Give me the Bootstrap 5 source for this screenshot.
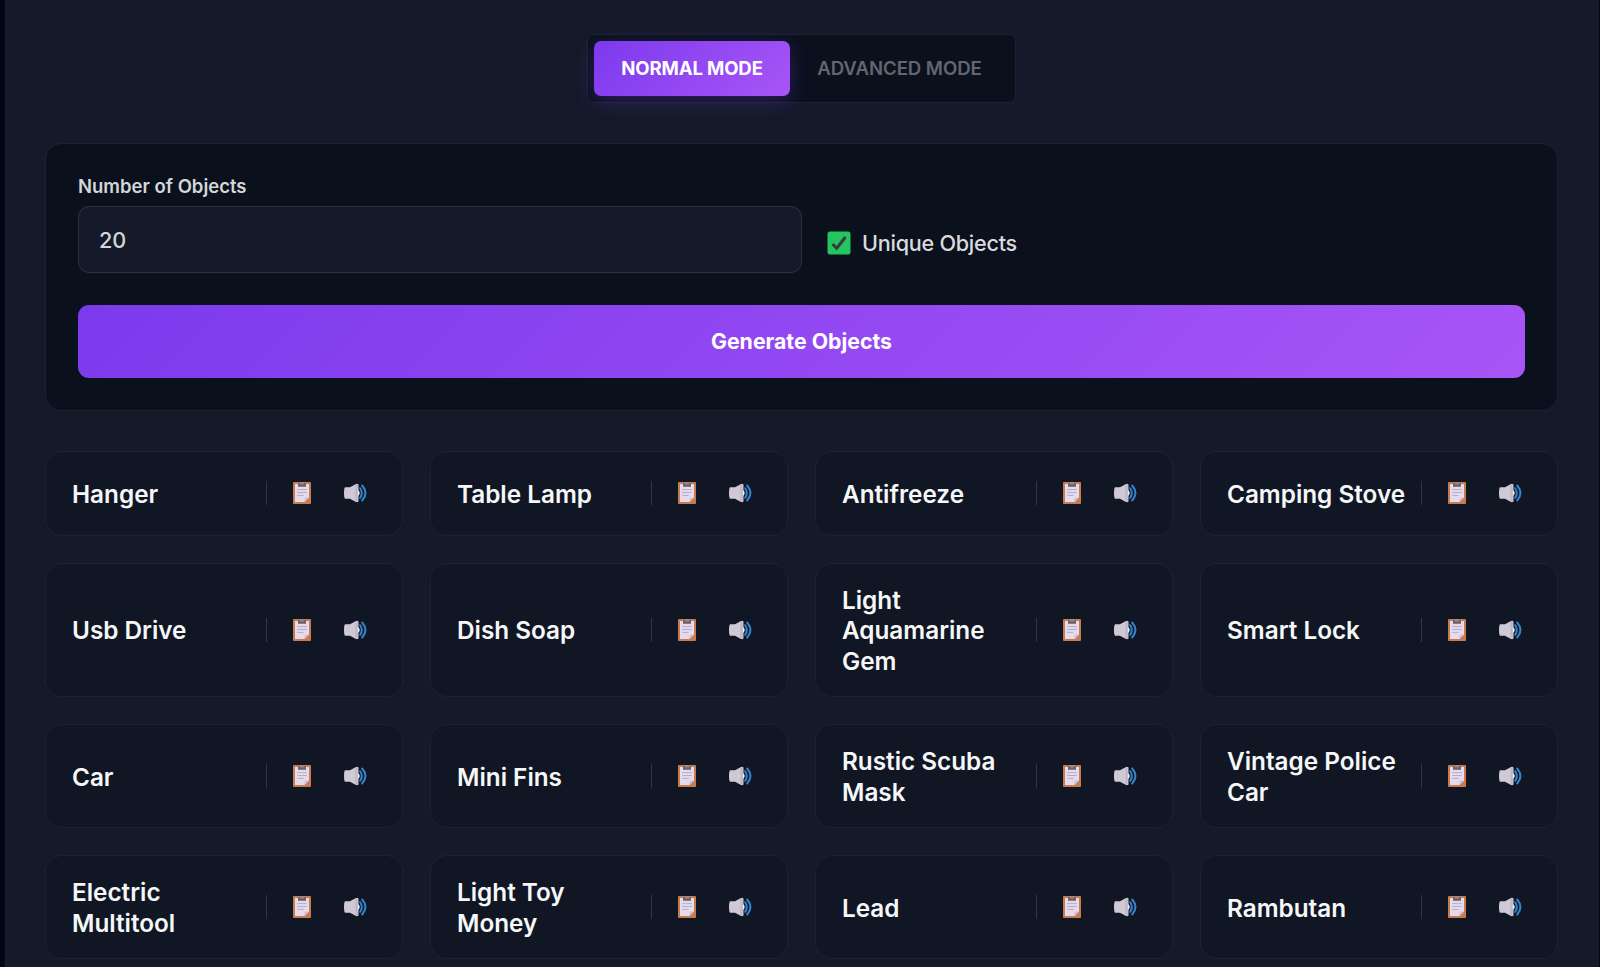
<!DOCTYPE html>
<html lang="en">
<head>
<meta charset="utf-8">
<meta name="viewport" content="width=device-width, initial-scale=1">
<title>Random Object Generator</title>
<link href="https://cdn.jsdelivr.net/npm/bootstrap@5.3.0/dist/css/bootstrap.min.css" rel="stylesheet">
<style>
  html { overflow: hidden; }
  body { background: #030614; color: #f3f4f6; font-family: Inter, "Liberation Sans", sans-serif; height: 967px; overflow: hidden; }
  .generator { margin-left: 5px; margin-right: 1px; height: 967px; overflow: hidden; padding: 34px 41px 0 39px; background: #141a29; border-left: 1px solid #1a2130; }
  .mode-switch { width: 429px; height: 69px; padding: 6px; background: #0a101c; border: 1px solid #1c2232; border-radius: 7px; }
  .mode-switch .btn { font-size: 18.6px; font-weight: 600; padding: 0; border: 0; border-radius: 7px; color: #626672; height: 55px; }
  .mode-switch .btn.active { width: 196px; font-weight: 700; letter-spacing: -.15px; color: #fff; background: linear-gradient(135deg, #7c3aed, #a855f7); box-shadow: 0 5px 20px rgba(124, 58, 237, .3); }
  .mode-switch .other { width: 219px; letter-spacing: -.05px; }
  .settings { margin-top: 40px; height: 268px; padding: 31px 32px; background: #0a101c; border: 1px solid #1c2232; border-radius: 16px; }
  .settings .form-label { font-size: 18.5px; line-height: 23px; font-weight: 600; color: #d4d6da; margin-bottom: 8px; }
  .settings .form-control { width: 724px; height: 67px; padding: 0 20px; font-size: 21.6px; font-weight: 500; color: #d4d6da; background: #141a29; border: 1px solid #2c323f; border-radius: 11px; }
  .unique { margin-left: 25px; padding-top: 38px; gap: 11px; font-size: 21.6px; font-weight: 450; letter-spacing: -.25px; color: #d9dbdf; }
  .generate { margin-top: 32px; height: 73px; border: 0; border-radius: 11px; font-size: 21.3px; font-weight: 700; color: #fff; background: linear-gradient(135deg, #7c3aed, #a855f7); }
  .results { display: grid; grid-template-columns: repeat(4, 1fr); gap: 27px; margin-top: 40px; }
  .result { min-height: 84.500px; padding: 20.2px 26px; background: #101624; border: 1px solid #1c2230; border-radius: 17px; }
  .result-name { flex: 1 1 0; padding-top: 1px; margin-bottom: -1px; font-size: 24.3px; line-height: 30.75px; font-weight: 600; color: #f6f7f8; }
  .tools { width: 110px; height: 24px; margin-left: 8px; padding-left: 26px; border-left: 1px solid #303643; }
  .tools svg { display: block; flex: none; }
  .tools .speaker { margin-left: 33px; }
</style>
</head>
<body>
<svg class="d-none" aria-hidden="true">
  <symbol id="clipboard" viewBox="0 0 18 22">
    <rect width="18" height="22" rx="1" fill="#c87b4c"/>
    <path d="M2 2h14v13.500L11.500 20H2z" fill="#e4dbed"/>
    <path d="M16 15.500 11.500 20v-3.200l1.200-1.300z" fill="#cdbfd8"/>
    <path d="M5 1.200h8v3.600H5z" fill="#69646d"/>
    <path d="M7 1h4v1.400H7z" fill="#948b98"/>
    <path d="M4.200 7.600h9.600M4.200 10.500h9.600M4.200 13.400h6.500" stroke="#b9adc5" stroke-width="1"/>
  </symbol>
  <symbol id="speaker" viewBox="0 0 23 20">
    <path d="M1 4.300 6 4.200 11.500 1.200q2-.9 3 .4v16.800q-1 1.300-3 .4L6 15.800l-5-.1Q0 14.500 0 10T1 4.300z" fill="#cfc9d5"/>
    <path d="M11.500 1.800 13.500 1v18L11.500 18.200z" fill="#bdb6c4"/>
    <path d="M14 7q3.500 3 0 6z" fill="#f2edf5"/>
    <path d="M16.200 5.200q3.200 4.800 0 9.600M18.200 2.500q6.500 7.500 0 15" fill="none" stroke="#3584cb" stroke-width="2" stroke-linecap="round"/>
  </symbol>
</svg>
<main class="generator">
  <div class="mode-switch d-flex mx-auto">
    <button class="btn active">NORMAL MODE</button>
    <button class="btn other">ADVANCED MODE</button>
  </div>
  <section class="settings">
    <div class="d-flex align-items-center">
      <div>
        <label class="form-label d-block" for="count">Number of Objects</label>
        <input class="form-control shadow-none" id="count" type="text" value="20">
      </div>
      <label class="unique d-flex align-items-center">
        <svg width="24" height="24" viewBox="0 0 24 24"><rect x=".5" y=".5" width="23" height="23" rx="2.500" fill="#22c55e"/><path d="m5.500 13 4.200 4.200L18.500 6" fill="none" stroke="#3b3b3b" stroke-width="3"/></svg>
        <span>Unique Objects</span>
      </label>
    </div>
    <button class="generate btn w-100">Generate Objects</button>
  </section>
  <section class="results" id="results"></section>
</main>
<script src="https://cdn.jsdelivr.net/npm/bootstrap@5.3.0/dist/js/bootstrap.bundle.min.js"></script>
<script>
  const names = ["Hanger", "Table Lamp", "Antifreeze", "Camping Stove", "Usb Drive", "Dish Soap", "Light Aquamarine Gem", "Smart Lock",
    "Car", "Mini Fins", "Rustic Scuba Mask", "Vintage Police Car", "Electric Multitool", "Light Toy Money", "Lead", "Rambutan"];
  document.getElementById("results").innerHTML = names.map(name => `
    <article class="result d-flex align-items-center">
      <div class="result-name">${name}</div>
      <div class="tools d-flex align-items-center flex-shrink-0">
        <svg width="18" height="22"><use href="#clipboard"/></svg>
        <svg class="speaker" width="23" height="20"><use href="#speaker"/></svg>
      </div>
    </article>`).join("");
</script>
</body>
</html>
